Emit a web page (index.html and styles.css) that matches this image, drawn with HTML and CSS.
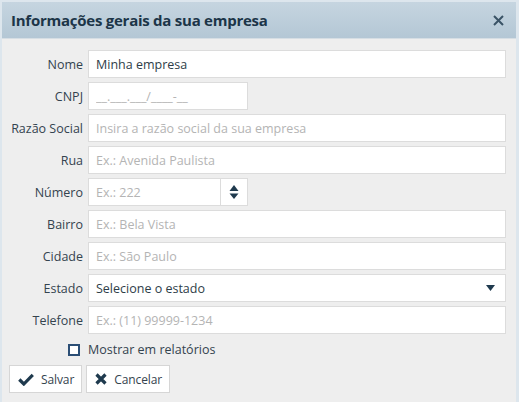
FILE: index.html
```html
<!DOCTYPE html>
<html lang="pt-BR">
<head>
<meta charset="utf-8">
<title>Informações gerais da sua empresa</title>
<link rel="stylesheet" href="styles.css">
</head>
<body>
<div class="dialog">
  <div class="dialog-header">
    <h1 class="dialog-title">Informações gerais da sua empresa</h1>
    <button class="close" type="button" aria-label="Fechar">
      <svg width="11" height="11" viewBox="0 0 11 11"><path d="M1 1L10 10M10 1L1 10" stroke="#3a5366" stroke-width="2" fill="none"/></svg>
    </button>
  </div>
  <div class="dialog-body">
    <form class="form">
      <label class="label">Nome</label>
      <div class="field"><input class="input" type="text" value="Minha empresa"></div>

      <label class="label">CNPJ</label>
      <div class="field"><input class="input short" type="text" placeholder="__.___.___/____-__"></div>

      <label class="label">Razão Social</label>
      <div class="field"><input class="input" type="text" placeholder="Insira a razão social da sua empresa"></div>

      <label class="label">Rua</label>
      <div class="field"><input class="input" type="text" placeholder="Ex.: Avenida Paulista"></div>

      <label class="label">Número</label>
      <div class="field">
        <div class="spin">
          <input class="spin-input" type="text" placeholder="Ex.: 222">
          <div class="spin-btns">
            <svg width="10" height="16" viewBox="0 0 10 16"><path d="M5 1L9.5 7H0.5Z" fill="#1f3a4e"/><path d="M0.5 9.5H9.5L5 15Z" fill="#1f3a4e"/></svg>
          </div>
        </div>
      </div>

      <label class="label">Bairro</label>
      <div class="field"><input class="input" type="text" placeholder="Ex.: Bela Vista"></div>

      <label class="label">Cidade</label>
      <div class="field"><input class="input" type="text" placeholder="Ex.: São Paulo"></div>

      <label class="label">Estado</label>
      <div class="field">
        <div class="select">
          <span>Selecione o estado</span>
          <svg width="9" height="6" viewBox="0 0 9 6"><path d="M0 0H9L4.5 6Z" fill="#1f3a4e"/></svg>
        </div>
      </div>

      <label class="label">Telefone</label>
      <div class="field"><input class="input" type="text" placeholder="Ex.: (11) 99999-1234"></div>

      <div class="check-cell"><span class="checkbox"></span></div>
      <div class="check-text">Mostrar em relatórios</div>
    </form>
    <div class="actions">
      <button class="btn" type="button">
        <svg width="16" height="13" viewBox="0 0 16 13"><path d="M1.3 6.5L5.8 11L14.8 1.8" stroke="#1f3a4e" stroke-width="3.2" fill="none"/></svg>
        <span>Salvar</span>
      </button>
      <button class="btn" type="button">
        <svg width="12" height="12" viewBox="0 0 12 12"><path d="M1.5 1.5L10.5 10.5M10.5 1.5L1.5 10.5" stroke="#1f3a4e" stroke-width="3.2" fill="none"/></svg>
        <span>Cancelar</span>
      </button>
    </div>
  </div>
</div>
</body>
</html>
```

FILE: styles.css
```css
* { box-sizing: border-box; }
html, body { margin: 0; padding: 0; }
body {
  background: #dde6ed;
  font-family: "Open Sans", "Noto Sans", sans-serif;
  font-size: 12.5px;
  color: #2e3d48;
  height: 402px;
  overflow: hidden;
}
.dialog {
  margin: 2px 3px 0 2px;
  background: #eeeeee;
  height: 420px;
}
.dialog-header {
  height: 37px;
  background: linear-gradient(#c6d5e0, #b4c7d5);
  border-bottom: 1px solid #d6dee4;
  display: flex;
  align-items: center;
  justify-content: space-between;
  padding: 0 12px 0 9px;
}
.dialog-title {
  margin: 0;
  font-size: 15px;
  font-weight: 700;
  color: #1c3548;
  letter-spacing: -0.25px;
}
.close {
  border: 0;
  background: none;
  padding: 0;
  display: flex;
  width: 12px;
  height: 12px;
  align-items: center;
  justify-content: center;
}
.dialog-body {
  padding: 11px 10px 0 0;
}
.form {
  display: grid;
  grid-template-columns: 81px 1fr;
  column-gap: 5px;
  row-gap: 4px;
  align-items: center;
}
.label {
  text-align: right;
  color: #34434e;
}
.field { display: flex; }
.input, .spin, .select {
  height: 28px;
  border: 1px solid #dcdcdc;
  background: #fff;
  font-family: inherit;
  font-size: 12.5px;
  color: #2e3d48;
}
.input {
  width: 100%;
  padding: 0 7px;
  outline: none;
}
.input::placeholder, .spin-input::placeholder { color: #b4b4b4; }
.input.short { width: 160px; }
.spin {
  width: 160px;
  display: flex;
}
.spin-input {
  flex: 1;
  min-width: 0;
  border: 0;
  padding: 0 7px;
  font-family: inherit;
  font-size: 12.5px;
  outline: none;
  background: transparent;
}
.spin-btns {
  width: 27px;
  border-left: 1px solid #dcdcdc;
  display: flex;
  align-items: center;
  justify-content: center;
}
.select {
  width: 100%;
  display: flex;
  align-items: center;
  justify-content: space-between;
  padding: 0 10px 0 7px;
}
.check-cell {
  display: flex;
  justify-content: flex-end;
  padding-right: 3px;
  margin-top: 3px;
}
.checkbox {
  width: 12px;
  height: 12px;
  border: 2px solid #2b4e75;
  background: #fff;
}
.check-text {
  margin-top: 3px;
  color: #34434e;
}
.actions {
  display: flex;
  gap: 4px;
  padding: 7px 0 0 7px;
}
.btn {
  height: 28px;
  display: flex;
  align-items: center;
  gap: 7px;
  background: #fff;
  border: 1px solid #d6d6d6;
  font-family: inherit;
  font-size: 12px;
  letter-spacing: -0.1px;
  color: #34434e;
  padding: 0 7px 0 8px;
}
```
